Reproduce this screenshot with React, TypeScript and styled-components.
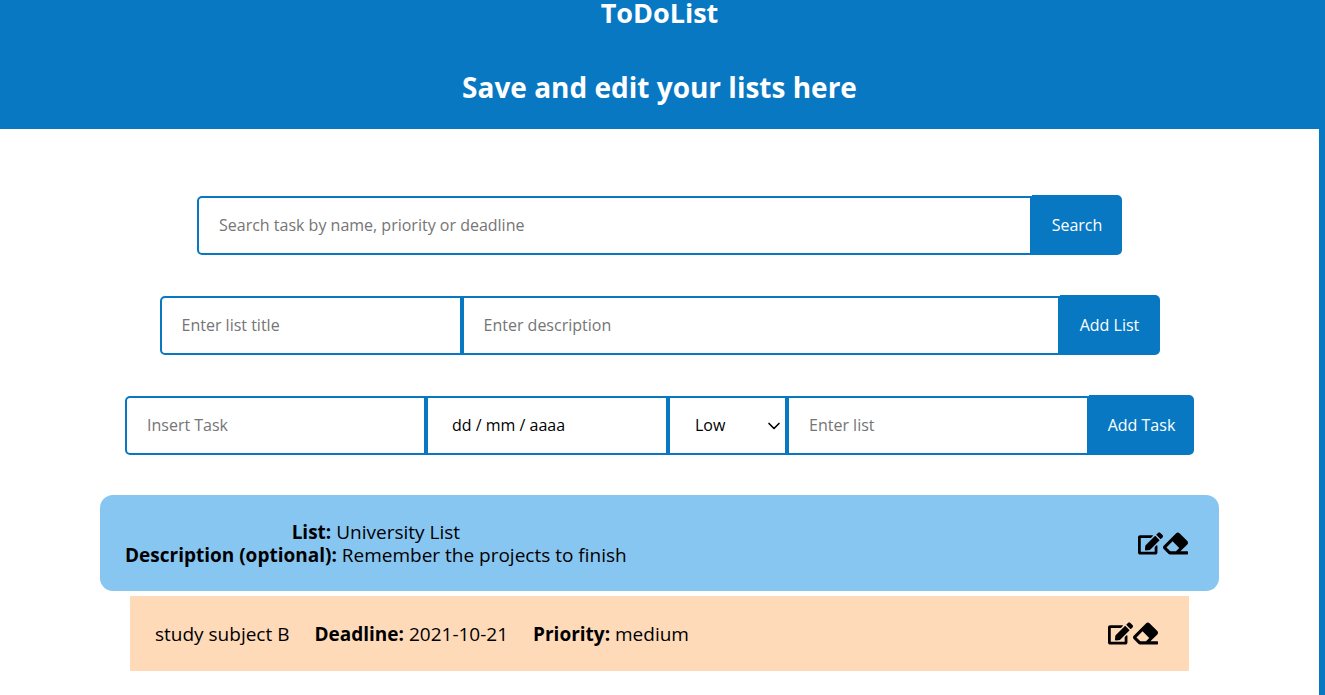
import React from 'react';
import styled, { createGlobalStyle, css } from 'styled-components';
import { FaEdit, FaEraser } from 'react-icons/fa';
import { ChevronDown } from 'lucide-react';

const BLUE = '#0878c3';

const GlobalStyle = createGlobalStyle`
  * { box-sizing: border-box; }
  body {
    margin: 0;
    background: #fff;
    color: #000;
    font-family: 'Open Sans', 'Noto Sans', sans-serif;
    font-size: 19px;
    font-weight: 500;
    line-height: 23px;
  }
  input, select, button { font: inherit; }
`;

const Page = styled.div`
  min-height: 100vh;
  border-right: 6px solid ${BLUE};
`;

const Header = styled.header`
  display: flex;
  flex-direction: column;
  align-items: center;
  gap: 50px;
  padding-bottom: 29px;
  background: ${BLUE};
  color: #fff;
`;

const heading = css`
  margin: 0;
  font-weight: 700;
  line-height: 25px;
`;

const Title = styled.h1`
  ${heading}
  font-size: 27px;
`;

const Subtitle = styled.h2`
  ${heading}
  font-size: 28px;
`;

const Main = styled.main`
  display: flex;
  flex-direction: column;
  align-items: center;
  padding: 66px 100px 24px;
`;

const Form = styled.form<{ $width: number }>`
  display: flex;
  align-items: flex-end;
  width: 100%;
  max-width: ${({ $width }) => $width}px;
  margin-bottom: 40px;
  font-size: 16px;
`;

const field = css`
  min-width: 0;
  height: 59px;
  border: 2px solid ${BLUE};
  border-radius: 0;
  background: #fff;
  color: #000;
  outline: none;
`;

const Input = styled.input<{ $width?: number }>`
  ${field}
  flex: ${({ $width }) => ($width ? `0 1 ${$width}px` : '1 1 0')};
  padding: 0 20px 2px;

  &:first-child {
    border-radius: 5px 0 0 5px;
  }

  &::placeholder {
    color: #757575;
    opacity: 1;
  }
`;

const DateInput = styled(Input)`
  padding: 0 24px 2px;

  &::placeholder {
    color: #000;
  }
`;

const SelectBox = styled.div`
  position: relative;
  display: flex;
  flex: 0 0 119px;

  svg {
    position: absolute;
    right: 3px;
    top: 20px;
    pointer-events: none;
  }
`;

const Select = styled.select`
  ${field}
  width: 100%;
  padding: 0 24px 0 25px;
  appearance: none;
`;

const SubmitButton = styled.button<{ $width: number }>`
  flex: 0 0 ${({ $width }) => $width}px;
  height: 60px;
  padding: 0;
  border: 0;
  border-radius: 0 5px 5px 0;
  background: ${BLUE};
  color: #fff;
  cursor: pointer;
`;

const ListSection = styled.section`
  display: flex;
  flex-direction: column;
  gap: 5px;
  width: 100%;
`;

const row = css`
  display: flex;
  align-items: center;
  justify-content: space-between;
`;

const ListCard = styled.header`
  ${row}
  padding: 24px 31px 24px 25px;
  border-radius: 13px;
  background: #88c6f2;
`;

const ListInfo = styled.div`
  padding-top: 2px;
  text-align: center;
`;

const Line = styled.p`
  margin: 0;
`;

const TaskCard = styled.article`
  ${row}
  margin: 0 30px;
  padding: 25px 31px 25px 25px;
  background: #fedab9;
`;

const TaskInfo = styled.div`
  display: flex;
  flex-wrap: wrap;
  gap: 0 25px;
  padding-top: 2px;
`;

const Label = styled.strong`
  font-weight: 700;
`;

const Actions = styled.div`
  display: flex;
`;

const IconButton = styled.button`
  display: flex;
  padding: 0;
  border: 0;
  background: none;
  color: #000;
  cursor: pointer;
`;

function RowActions({ item }: { item: string }) {
  return (
    <Actions>
      <IconButton type="button" aria-label={`Edit ${item}`}>
        <FaEdit size={25} />
      </IconButton>
      <IconButton type="button" aria-label={`Delete ${item}`}>
        <FaEraser size={25} />
      </IconButton>
    </Actions>
  );
}

const list = { title: 'University List', description: 'Remember the projects to finish' };
const tasks = [{ name: 'study subject B', deadline: '2021-10-21', priority: 'medium' }];

export default function App() {
  const stay = (event: React.FormEvent) => event.preventDefault();

  return (
    <Page>
      <GlobalStyle />
      <Header>
        <Title>ToDoList</Title>
        <Subtitle>Save and edit your lists here</Subtitle>
      </Header>
      <Main>
        <Form $width={925} onSubmit={stay}>
          <Input aria-label="Search task" placeholder="Search task by name, priority or deadline" />
          <SubmitButton $width={90}>Search</SubmitButton>
        </Form>
        <Form $width={1000} onSubmit={stay}>
          <Input $width={302} aria-label="List title" placeholder="Enter list title" />
          <Input aria-label="List description" placeholder="Enter description" />
          <SubmitButton $width={100}>Add List</SubmitButton>
        </Form>
        <Form $width={1069} onSubmit={stay}>
          <Input $width={301} aria-label="Task name" placeholder="Insert Task" />
          <DateInput $width={242} aria-label="Deadline" placeholder="dd / mm / aaaa" />
          <SelectBox>
            <Select aria-label="Priority" defaultValue="low">
              <option value="low">Low</option>
              <option value="medium">Medium</option>
              <option value="high">High</option>
            </Select>
            <ChevronDown size={20} strokeWidth={2} aria-hidden />
          </SelectBox>
          <Input aria-label="List of the task" placeholder="Enter list" />
          <SubmitButton $width={105}>Add Task</SubmitButton>
        </Form>
        <ListSection>
          <ListCard>
            <ListInfo>
              <Line><Label>List:</Label> {list.title}</Line>
              <Line><Label>Description (optional):</Label> {list.description}</Line>
            </ListInfo>
            <RowActions item={list.title} />
          </ListCard>
          {tasks.map((task) => (
            <TaskCard key={task.name}>
              <TaskInfo>
                <span>{task.name}</span>
                <span><Label>Deadline:</Label> {task.deadline}</span>
                <span><Label>Priority:</Label> {task.priority}</span>
              </TaskInfo>
              <RowActions item={task.name} />
            </TaskCard>
          ))}
        </ListSection>
      </Main>
    </Page>
  );
}
